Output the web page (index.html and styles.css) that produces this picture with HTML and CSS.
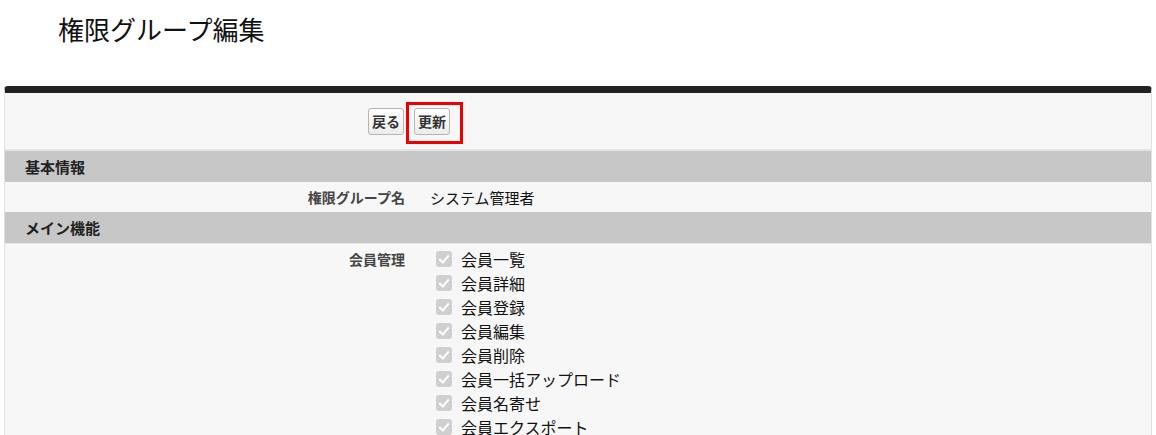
FILE: index.html
```html
<!DOCTYPE html>
<html lang="ja">
<head>
<meta charset="utf-8">
<link rel="stylesheet" href="styles.css">
</head>
<body>
<h1 class="title">権限グループ編集</h1>
<div class="panel">
  <div class="button-row">
    <button class="btn">戻る</button>
    <span class="highlight-wrap"><button class="btn">更新</button><span class="highlight"></span></span>
  </div>
  <div class="section-header">基本情報</div>
  <div class="field-row">
    <div class="label">権限グループ名</div>
    <div class="value">システム管理者</div>
  </div>
  <div class="section-header">メイン機能</div>
  <div class="field-row checks-row">
    <div class="label">会員管理</div>
    <div class="value checks">
      <div class="check-item"><span class="cb"></span>会員一覧</div>
      <div class="check-item"><span class="cb"></span>会員詳細</div>
      <div class="check-item"><span class="cb"></span>会員登録</div>
      <div class="check-item"><span class="cb"></span>会員編集</div>
      <div class="check-item"><span class="cb"></span>会員削除</div>
      <div class="check-item"><span class="cb"></span>会員一括アップロード</div>
      <div class="check-item"><span class="cb"></span>会員名寄せ</div>
      <div class="check-item"><span class="cb"></span>会員エクスポート</div>
    </div>
  </div>
</div>
</body>
</html>
```

FILE: styles.css
```css
html, body {
  margin: 0;
  padding: 0;
  background: #ffffff;
  font-family: "Noto Sans CJK JP", "Noto Sans", sans-serif;
  color: #222;
}
body {
  height: 435px;
  overflow: hidden;
}
.title {
  margin: 0;
  padding: 12px 0 0 58px;
  height: 86px;
  box-sizing: border-box;
  font-size: 26px;
  font-weight: normal;
  line-height: 34px;
  color: #111;
}
.panel {
  margin: 0 4px;
  background: #f7f7f7;
  border: 1px solid #e2e2e2;
  border-top: 7px solid #222;
  border-radius: 4px 4px 0 0;
}
.button-row {
  height: 56px;
  display: flex;
  align-items: center;
  gap: 10px;
  padding-left: 363px;
  border-bottom: 2px solid #e4e4e4;
}
.btn {
  height: 27px;
  padding: 0 3px;
  border: 1px solid #b5b5b5;
  border-radius: 3px;
  background: linear-gradient(#ffffff, #ececec);
  font-family: "Noto Sans CJK JP", sans-serif;
  font-size: 14px;
  font-weight: bold;
  color: #333;
  line-height: 25px;
}
.highlight-wrap {
  position: relative;
  display: inline-flex;
}
.highlight {
  position: absolute;
  left: -8px;
  top: -6px;
  width: 57px;
  height: 42px;
  box-sizing: border-box;
  border: 3px solid #ee0000;
}
.section-header {
  height: 31px;
  background: #c7c7c7;
  padding-left: 20px;
  font-size: 15px;
  font-weight: bold;
  line-height: 31px;
  color: #222;
}
.field-row {
  display: flex;
  height: 30px;
  align-items: center;
}
.label {
  width: 400px;
  text-align: right;
  font-size: 14px;
  font-weight: bold;
  color: #444;
  flex: none;
}
.value {
  padding-left: 25px;
  font-size: 15px;
  color: #111;
}
.checks-row {
  height: auto;
  align-items: flex-start;
  border-top: 1px solid #e4e4e4;
  padding-top: 3px;
}
.checks-row .label {
  line-height: 24px;
}
.checks {
  padding-left: 31px;
  font-size: 16px;
}
.check-item {
  height: 24px;
  display: flex;
  align-items: center;
  line-height: 24px;
}
.cb {
  width: 16px;
  height: 16px;
  border-radius: 3px;
  background: #cfcfcf;
  margin-right: 9px;
  position: relative;
  flex: none;
}
.cb::after {
  content: "";
  position: absolute;
  left: 5px;
  top: 2px;
  width: 4px;
  height: 8px;
  border: solid #ffffff;
  border-width: 0 2px 2px 0;
  transform: rotate(40deg);
}
```
